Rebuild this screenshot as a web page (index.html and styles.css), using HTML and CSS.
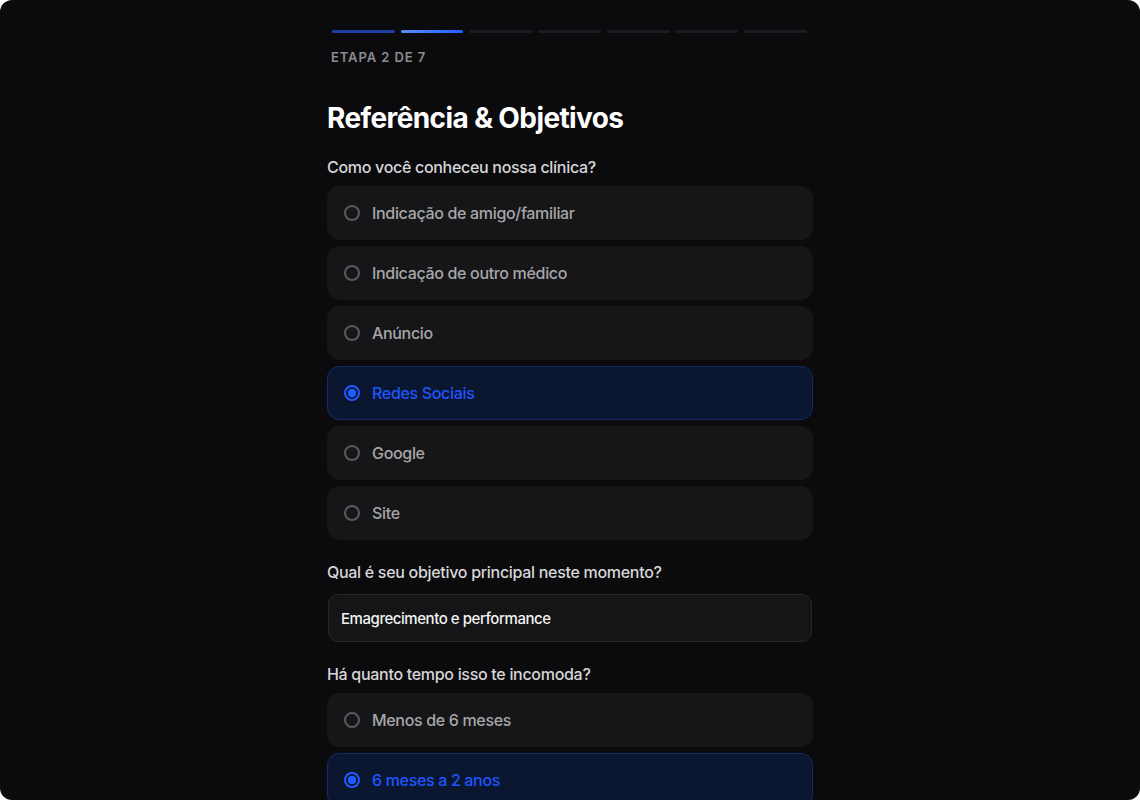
FILE: index.html
```html
<!DOCTYPE html>
<html lang="pt-BR">
<head>
    <meta charset="UTF-8">
    <meta name="viewport" content="width=device-width, initial-scale=1.0">
    <title>Referência &amp; Objetivos</title>
    <link rel="stylesheet" href="styles.css">
</head>
<body>
    <div class="frame">
        <main class="form">
            <div class="progress">
                <span class="seg done"></span>
                <span class="seg current"></span>
                <span class="seg"></span>
                <span class="seg"></span>
                <span class="seg"></span>
                <span class="seg"></span>
                <span class="seg"></span>
            </div>
            <div class="step-label">ETAPA 2 DE 7</div>

            <h1>Referência &amp; Objetivos</h1>

            <section class="field">
                <label class="question">Como você conheceu nossa clínica?</label>
                <div class="options">
                    <div class="option"><span class="radio"></span>Indicação de amigo/familiar</div>
                    <div class="option"><span class="radio"></span>Indicação de outro médico</div>
                    <div class="option"><span class="radio"></span>Anúncio</div>
                    <div class="option selected"><span class="radio"></span>Redes Sociais</div>
                    <div class="option"><span class="radio"></span>Google</div>
                    <div class="option"><span class="radio"></span>Site</div>
                </div>
            </section>

            <section class="field">
                <label class="question text-q">Qual é seu objetivo principal neste momento?</label>
                <div class="input">Emagrecimento e performance</div>
            </section>

            <section class="field">
                <label class="question">Há quanto tempo isso te incomoda?</label>
                <div class="options">
                    <div class="option"><span class="radio"></span>Menos de 6 meses</div>
                    <div class="option selected"><span class="radio"></span>6 meses a 2 anos</div>
                    <div class="option"><span class="radio"></span>Mais de 2 anos</div>
                </div>
            </section>
        </main>
    </div>
</body>
</html>
```

FILE: styles.css
```css
html, body {
    margin: 0;
    padding: 0;
    background: #ffffff;
}
body {
    font-family: Inter, "Noto Sans", Arial, sans-serif;
}
.frame {
    width: 1140px;
    height: 800px;
    border-radius: 12px;
    background: #0b0b0d;
    overflow: hidden;
}
.form {
    width: 486px;
    margin: 0 auto;
    padding-top: 30px;
}
.progress {
    display: flex;
    gap: 6px;
    width: 475px;
    margin-left: 5px;
}
.seg {
    flex: 1;
    height: 3px;
    border-radius: 2px;
    background: #1c1c20;
}
.seg.done {
    background: #1d3fa3;
}
.seg.current {
    background: linear-gradient(90deg, #5b8ff5, #1f5fff);
}
.step-label {
    margin-top: 16px;
    margin-left: 4px;
    font-size: 13px;
    line-height: 16px;
    font-weight: 600;
    letter-spacing: 0.9px;
    color: #8b8b90;
}
h1 {
    margin: 36px 0 0;
    font-size: 28px;
    line-height: 34px;
    font-weight: 700;
    letter-spacing: -0.6px;
    color: #ffffff;
}
.field {
    margin-top: 22px;
}
.question {
    display: block;
    font-size: 16px;
    line-height: 20px;
    font-weight: 500;
    letter-spacing: -0.3px;
    color: #d6d6d8;
    margin-bottom: 9px;
}
.text-q {
    margin-bottom: 12px;
}
.options {
    display: flex;
    flex-direction: column;
    gap: 6px;
}
.option {
    display: flex;
    align-items: center;
    gap: 12px;
    height: 54px;
    box-sizing: border-box;
    padding: 0 16px;
    border: 1px solid #161618;
    border-radius: 12px;
    background: #161618;
    font-size: 16px;
    font-weight: 500;
    letter-spacing: -0.33px;
    color: #a6a6a9;
}
.radio {
    width: 16px;
    height: 16px;
    box-sizing: border-box;
    border: 2px solid #5a5a5e;
    border-radius: 50%;
    flex-shrink: 0;
}
.option.selected {
    background: #0b1631;
    border-color: #132a66;
    color: #1f55ff;
}
.option.selected .radio {
    border-color: #1f5cff;
    background: radial-gradient(circle, #1f5cff 0 4px, transparent 4.5px);
}
.input {
    height: 48px;
    box-sizing: border-box;
    display: flex;
    align-items: center;
    padding: 0 12px;
    margin: 0 1px;
    border: 1px solid #27272a;
    border-radius: 10px;
    background: #151517;
    font-size: 15px;
    font-weight: 500;
    letter-spacing: -0.45px;
    color: #f2f2f2;
}
```
